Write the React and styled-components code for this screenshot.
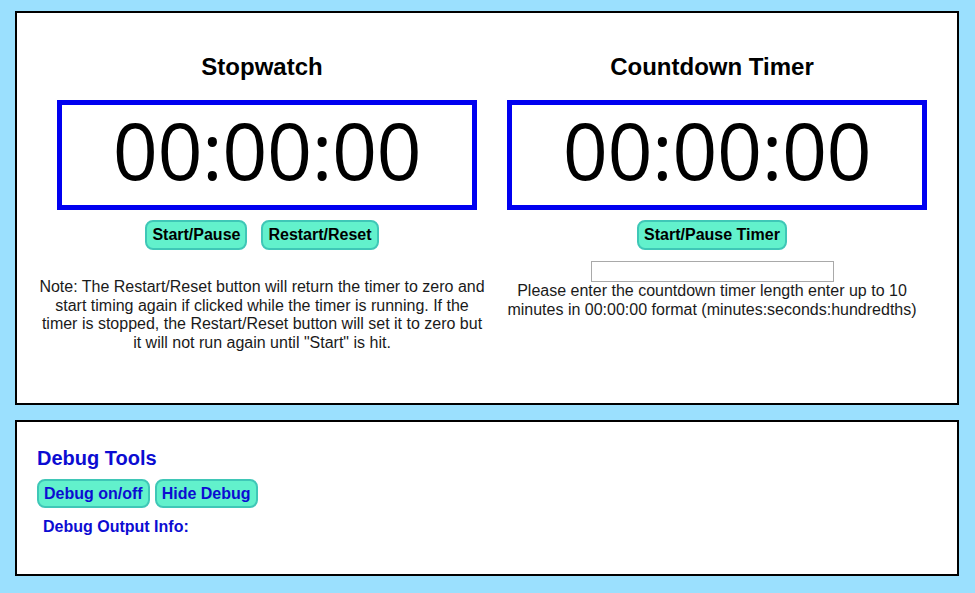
import React from "react";
import styled, { createGlobalStyle } from "styled-components";

const Global = createGlobalStyle`
  html, body { margin: 0; padding: 0; background: #9be0fe; }
  body { font-family: "Liberation Sans", Arial, sans-serif; color: #111; }
`;

const Page = styled.div`
  padding: 11px 16px 17px 15px;
  display: flex;
  flex-direction: column;
  gap: 15px;
`;

const Panel = styled.section`
  background: #fff;
  border: 2px solid #000;
  height: ${(p) => p.$h}px;
  box-sizing: border-box;
`;

const TimerPanel = styled(Panel)`
  padding: 40px 20px 0;
  display: grid;
  grid-template-columns: 450px 450px;
  align-items: start;
`;

const Column = styled.div`
  display: flex;
  flex-direction: column;
  align-items: center;
`;

const Title = styled.h2`
  margin: 0;
  font-size: 24px;
  line-height: 28px;
  font-weight: bold;
  color: #000;
`;

const Display = styled.div`
  box-sizing: border-box;
  width: 420px;
  height: 110px;
  margin: 19px 0 0 10px;
  padding-bottom: 12px;
  border: 5px solid #0000f0;
  display: flex;
  align-items: center;
  justify-content: center;
  font-family: "Open Sans", sans-serif;
  font-size: 79px;
  line-height: 1;
  color: #000;
  letter-spacing: -0.5px;
`;

const ButtonRow = styled.div`
  display: flex;
  gap: ${(p) => p.$gap}px;
  margin-top: ${(p) => p.$mt || 0}px;
`;

const Btn = styled.button`
  font-family: "Liberation Sans", Arial, sans-serif;
  font-weight: bold;
  font-size: 16px;
  color: ${(p) => (p.$blue ? "#0c0cd2" : "#000")};
  background: #62f1cc;
  border: 2px solid #3fc7b7;
  border-radius: 8px;
  height: ${(p) => p.$h || 30}px;
  padding: 0 5px;
  cursor: pointer;
`;

const Note = styled.p`
  margin: 28px 0 0;
  font-size: 16px;
  line-height: 18.5px;
  text-align: center;
  color: #1a1a1a;
`;

const Input = styled.input`
  box-sizing: border-box;
  width: 243px;
  height: 21px;
  margin: 11px 0 0;
  border: 1px solid #a9a9a9;
  padding: 0;
`;

const Hint = styled.p`
  margin: 0;
  font-size: 16px;
  line-height: 18.5px;
  text-align: center;
  color: #1a1a1a;
`;

const DebugPanel = styled(Panel)`
  padding: 24px 20px 0;
  display: flex;
  flex-direction: column;
  align-items: flex-start;
  color: #0c0cd2;
`;

const DebugTitle = styled.h3`
  margin: 0;
  font-size: 20px;
  line-height: 24px;
  font-weight: bold;
`;

const DebugInfo = styled.div`
  margin: 10px 0 0 6px;
  font-size: 16px;
  font-weight: bold;
  line-height: 18px;
`;

export default function App() {
  return (
    <>
      <Global />
      <Page>
        <TimerPanel $h={394}>
          <Column>
            <Title>Stopwatch</Title>
            <Display>00:00:00</Display>
            <ButtonRow $gap={14} $mt={10}>
              <Btn>Start/Pause</Btn>
              <Btn>Restart/Reset</Btn>
            </ButtonRow>
            <Note>
              Note: The Restart/Reset button will return the timer to zero and
              start timing again if clicked while the timer is running. If the
              timer is stopped, the Restart/Reset button will set it to zero but
              it will not run again until "Start" is hit.
            </Note>
          </Column>
          <Column>
            <Title>Countdown Timer</Title>
            <Display>00:00:00</Display>
            <ButtonRow $gap={0} $mt={10}>
              <Btn>Start/Pause Timer</Btn>
            </ButtonRow>
            <Input type="text" />
            <Hint>
              Please enter the countdown timer length enter up to 10
              <br />
              minutes in 00:00:00 format (minutes:seconds:hundredths)
            </Hint>
          </Column>
        </TimerPanel>
        <DebugPanel $h={156}>
          <DebugTitle>Debug Tools</DebugTitle>
          <ButtonRow $gap={5} $mt={9}>
            <Btn $blue $h={29}>Debug on/off</Btn>
            <Btn $blue $h={29}>Hide Debug</Btn>
          </ButtonRow>
          <DebugInfo>Debug Output Info:</DebugInfo>
        </DebugPanel>
      </Page>
    </>
  );
}
